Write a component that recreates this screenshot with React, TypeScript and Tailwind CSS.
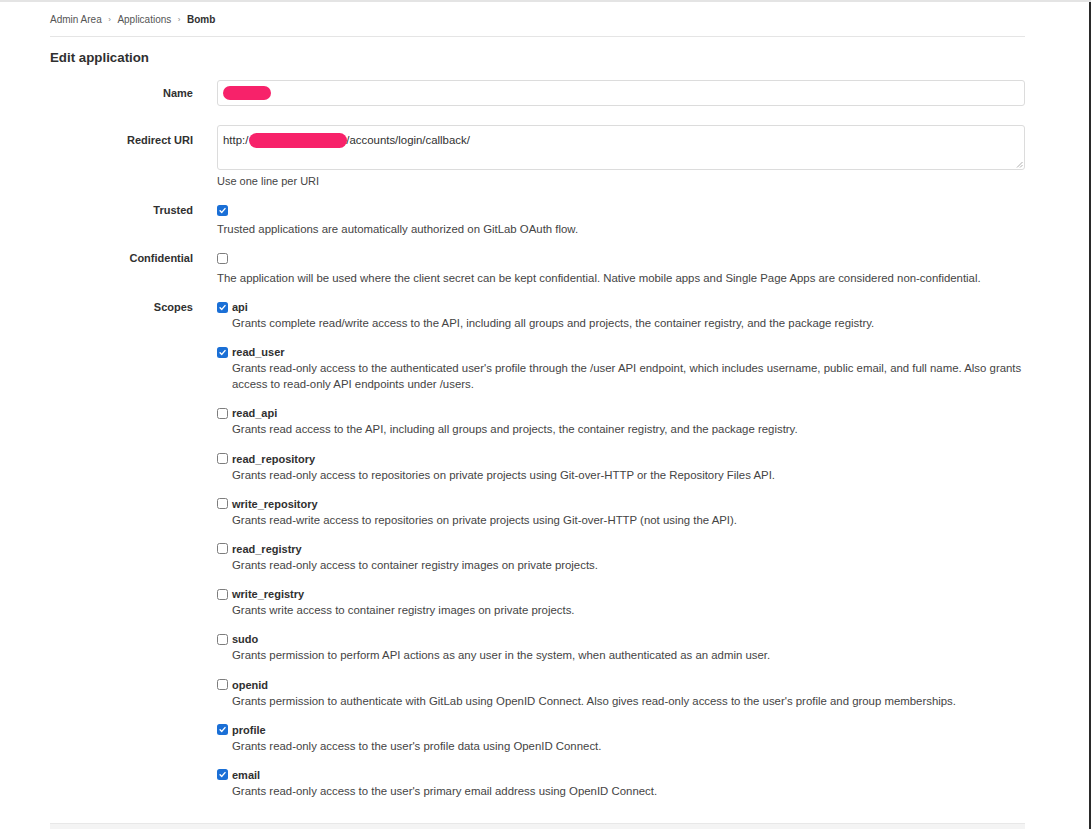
import React from "react";

function Check({ checked }: { checked: boolean }) {
  if (checked) {
    return (
      <span className="inline-flex h-[11px] w-[11px] shrink-0 items-center justify-center rounded-[2.5px] bg-[#1a6fd6]">
        <svg width="9" height="9" viewBox="0 0 10 10" fill="none">
          <path d="M2.3 5.2 L4.2 7.1 L7.8 2.9" stroke="white" strokeWidth="1.6" strokeLinecap="round" strokeLinejoin="round" />
        </svg>
      </span>
    );
  }
  return <span className="inline-block h-[11px] w-[11px] shrink-0 rounded-[2.5px] border border-[#7d7d7d] bg-white" />;
}

const scopes: { name: string; checked: boolean; desc: React.ReactNode }[] = [
  { name: "api", checked: true, desc: "Grants complete read/write access to the API, including all groups and projects, the container registry, and the package registry." },
  {
    name: "read_user",
    checked: true,
    desc: (
      <>
        <span className="block whitespace-nowrap">Grants read-only access to the authenticated user's profile through the /user API endpoint, which includes username, public email, and full name. Also grants</span>
        <span className="block">access to read-only API endpoints under /users.</span>
      </>
    ),
  },
  { name: "read_api", checked: false, desc: "Grants read access to the API, including all groups and projects, the container registry, and the package registry." },
  { name: "read_repository", checked: false, desc: "Grants read-only access to repositories on private projects using Git-over-HTTP or the Repository Files API." },
  { name: "write_repository", checked: false, desc: "Grants read-write access to repositories on private projects using Git-over-HTTP (not using the API)." },
  { name: "read_registry", checked: false, desc: "Grants read-only access to container registry images on private projects." },
  { name: "write_registry", checked: false, desc: "Grants write access to container registry images on private projects." },
  { name: "sudo", checked: false, desc: "Grants permission to perform API actions as any user in the system, when authenticated as an admin user." },
  { name: "openid", checked: false, desc: "Grants permission to authenticate with GitLab using OpenID Connect. Also gives read-only access to the user's profile and group memberships." },
  { name: "profile", checked: true, desc: "Grants read-only access to the user's profile data using OpenID Connect." },
  { name: "email", checked: true, desc: "Grants read-only access to the user's primary email address using OpenID Connect." },
];

function Label({ children, pt }: { children: React.ReactNode; pt: string }) {
  return <div className={`w-[143px] shrink-0 text-right font-bold text-[11px] leading-[16px] text-[#303030] ${pt}`}>{children}</div>;
}

export default function App() {
  return (
    <div
      className="relative h-[829px] w-[1091px] overflow-hidden border-t-2 border-[#e4e4e4] bg-white text-[#333]"
      style={{ fontFamily: '"Liberation Sans", Arial, sans-serif' }}
    >
      <div className="absolute right-0 top-0 h-full w-[2px] bg-[#2a2a2a]" />
      <div className="ml-[50px] w-[975px]">
        {/* breadcrumb */}
        <div className="flex h-[35px] items-center border-b border-[#e5e5e5] pt-[1px] text-[10px] text-[#555]">
          <span>Admin Area</span>
          <span className="mx-[6.5px] text-[8px] text-[#888]">›</span>
          <span>Applications</span>
          <span className="mx-[6.5px] text-[8px] text-[#888]">›</span>
          <span className="font-bold text-[#303030]">Bomb</span>
        </div>

        <h1 className="mt-[11px] text-[13.3px] font-bold leading-[20px] text-[#303030]">Edit application</h1>

        {/* Name */}
        <div className="mt-[12px] flex gap-[24px]">
          <Label pt="pt-[5px]">Name</Label>
          <div className="flex h-[26px] flex-1 items-center rounded-[3px] border border-[#dcdcdc] px-[5px]">
            <span className="h-[14px] w-[48px] rounded-full bg-[#f7226a]" />
          </div>
        </div>

        {/* Redirect URI */}
        <div className="mt-[19px] flex gap-[24px]">
          <Label pt="pt-[7px]">Redirect URI</Label>
          <div className="flex-1">
            <div className="relative h-[45px] rounded-[3px] border border-[#dcdcdc] px-[5px] pt-[6px]">
              <div className="flex items-center text-[11.4px] leading-[16px] text-[#303030]">
                <span>http:/</span>
                <span className="ml-[1px] -mr-[1px] h-[15px] w-[98px] rounded-full bg-[#f7226a]" />
                <span>/accounts/login/callback/</span>
              </div>
              <svg className="absolute bottom-[1px] right-[1px]" width="7" height="7" viewBox="0 0 7 7">
                <path d="M6.5 1 L1 6.5 M6.5 4 L4 6.5" stroke="#9a9a9a" strokeWidth="0.8" />
              </svg>
            </div>
            <div className="mt-[3px] text-[11px] leading-[16px] text-[#444]">Use one line per URI</div>
          </div>
        </div>

        {/* Trusted */}
        <div className="mt-[13px] flex gap-[24px]">
          <Label pt="pt-0">Trusted</Label>
          <div className="flex-1">
            <div className="flex h-[16px] items-center">
              <Check checked />
            </div>
            <div className="mt-[3px] text-[11.4px] leading-[16px] text-[#444]">Trusted applications are automatically authorized on GitLab OAuth flow.</div>
          </div>
        </div>

        {/* Confidential */}
        <div className="mt-[13px] flex gap-[24px]">
          <Label pt="pt-0">Confidential</Label>
          <div className="flex-1">
            <div className="flex h-[16px] items-center">
              <Check checked={false} />
            </div>
            <div className="mt-[4px] text-[11.4px] leading-[16px] text-[#444]">
              The application will be used where the client secret can be kept confidential. Native mobile apps and Single Page Apps are considered non-confidential.
            </div>
          </div>
        </div>

        {/* Scopes */}
        <div className="mt-[13px] flex gap-[24px]">
          <Label pt="pt-0">Scopes</Label>
          <div className="flex flex-1 flex-col gap-[13.2px]">
            {scopes.map((s) => (
              <div key={s.name}>
                <div className="flex h-[16px] items-center gap-[4px]">
                  <Check checked={s.checked} />
                  <span className="text-[11px] font-bold leading-[16px] text-[#303030]">{s.name}</span>
                </div>
                <div className="pl-[15px] text-[11.4px] leading-[16px] text-[#444]">{s.desc}</div>
              </div>
            ))}
          </div>
        </div>

        {/* form actions */}
        <div className="mt-[24px] h-[40px] border-t border-[#e8e8e8] bg-[#f4f4f4]" />
      </div>
    </div>
  );
}
